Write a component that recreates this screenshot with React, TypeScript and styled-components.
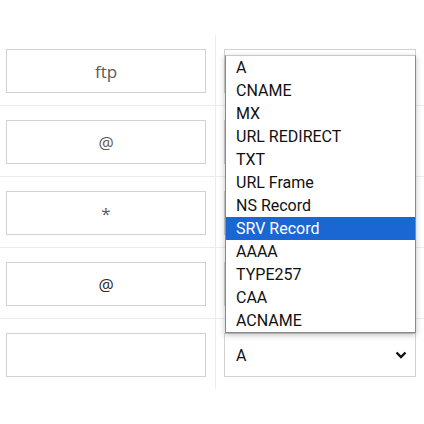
import { ReactElement } from 'react';
import styled, { createGlobalStyle } from 'styled-components';

type Row = {
  host: string;
  dark?: boolean;
  type: string;
};

// rows under the open listbox show no value (it's hidden behind the popup)
const rows: Row[] = [
  { host: 'ftp', type: '' },
  { host: '@', type: '' },
  { host: '*', type: '' },
  { host: '@', dark: true, type: '' },
  { host: '', type: 'A' }
];

const recordTypes = [
  'A',
  'CNAME',
  'MX',
  'URL REDIRECT',
  'TXT',
  'URL Frame',
  'NS Record',
  'SRV Record',
  'AAAA',
  'TYPE257',
  'CAA',
  'ACNAME'
];

const Chevron = (): ReactElement => (
  <svg width="12" height="8" viewBox="0 0 12 8">
    <path d="M1.5 1.5 L6 6 L10.5 1.5" fill="none" stroke="#111" strokeWidth="2.4" />
  </svg>
);

const App = (): ReactElement => {
  return (
    <>
      <GlobalStyle />
      <Table>
        {rows.map((row, i) => (
          <TableRow key={i}>
            <HostCell>
              <HostInput $dark={row.dark}>{row.host}</HostInput>
            </HostCell>
            <TypeCell>
              <Select>
                <span>{row.type}</span>
                <Chevron />
              </Select>
              {i === 0 && (
                <Listbox>
                  {recordTypes.map((t) => (
                    <Option key={t} $selected={t === 'SRV Record'}>
                      {t}
                    </Option>
                  ))}
                </Listbox>
              )}
            </TypeCell>
          </TableRow>
        ))}
      </Table>
    </>
  );
};

const GlobalStyle = createGlobalStyle`
  html, body {
    margin: 0;
    padding: 0;
    background: #fff;
  }
`;

const Table = styled.div`
  padding-top: 35px;
  display: flex;
  flex-direction: column;
`;

const TableRow = styled.div`
  display: flex;
  border-bottom: 1px solid #ececec;
  &:last-child {
    border-bottom: none;
  }
`;

const HostCell = styled.div`
  width: 209px;
  padding: 14px 0 12px 6px;
  border-right: 1px solid #ececec;
`;

const HostInput = styled.div<{ $dark?: boolean }>`
  box-sizing: border-box;
  width: 200px;
  height: 44px;
  border: 1px solid #d2d2d2;
  display: flex;
  align-items: center;
  justify-content: center;
  font-family: 'Open Sans', sans-serif;
  font-size: 17px;
  color: ${(p) => (p.$dark ? '#2a2a2a' : '#5a5a5a')};
`;

const TypeCell = styled.div`
  position: relative;
  padding: 14px 8px 12px 8px;
`;

const Select = styled.div`
  box-sizing: border-box;
  width: 192px;
  height: 44px;
  border: 1px solid #d2d2d2;
  display: flex;
  align-items: center;
  justify-content: space-between;
  padding: 0 8px 0 11px;
  font-family: Roboto, sans-serif;
  font-size: 16px;
  color: #111;
`;

const Listbox = styled.div`
  position: absolute;
  top: 20px;
  left: 9px;
  width: 191px;
  box-sizing: border-box;
  background: #fff;
  border: 1px solid #8a8a8a;
  border-top-color: #c8c8c8;
  box-shadow: 0 2px 6px rgba(0, 0, 0, 0.25);
  display: flex;
  flex-direction: column;
  z-index: 5;
`;

const Option = styled.div<{ $selected?: boolean }>`
  height: 23px;
  line-height: 23px;
  padding-left: 10px;
  font-family: Roboto, sans-serif;
  font-size: 16px;
  color: ${(p) => (p.$selected ? '#fff' : '#111')};
  background: ${(p) => (p.$selected ? '#1a66d2' : 'transparent')};
  white-space: nowrap;
`;

export default App;
